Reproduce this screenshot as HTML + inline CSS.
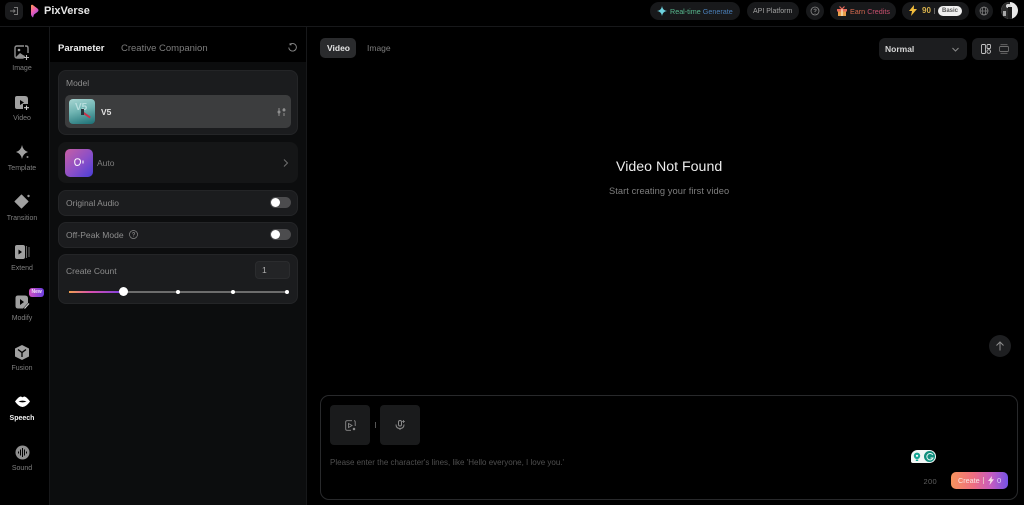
<!DOCTYPE html>
<html lang="en">
<head>
<meta charset="utf-8">
<title>PixVerse</title>
<style>
html,body{margin:0;padding:0;background:#000;width:1024px;height:505px;overflow:hidden}
body{position:relative;font-family:"Liberation Sans",sans-serif;color:#fff}
#r{position:absolute;left:0;top:0;width:1024px;height:505px;filter:blur(.35px);overflow:hidden}
.a{position:absolute}
.t{position:absolute;white-space:nowrap;line-height:1}
.card{position:absolute;left:58px;width:240px;background:#1b1c1e;border-radius:8px;box-sizing:border-box;border:1px solid #242527}
.nav{position:absolute;left:0;width:44px;text-align:center;font-size:7px;color:#7f7f7f;line-height:1}
.pill{position:absolute;top:2px;height:18px;border-radius:9px;background:#18191b}
.sw{position:absolute;left:270px;width:21px;height:11px;border-radius:6px;background:#4c4c4e}
.sw:after{content:"";position:absolute;left:1px;top:1px;width:9px;height:9px;border-radius:50%;background:#fff}
svg{position:absolute;overflow:visible}
</style>
</head>
<body>
<div id="r">
<!-- frame lines -->
<div class="a" style="left:0;top:26px;width:1024px;height:1px;background:#17181a"></div>
<div class="a" style="left:49px;top:27px;width:1px;height:478px;background:#17181a"></div>
<div class="a" style="left:50px;top:62px;width:256px;height:443px;background:#0c0d0e"></div>
<div class="a" style="left:306px;top:27px;width:1px;height:478px;background:#17181a"></div>

<!-- top left -->
<div class="a" style="left:5px;top:2px;width:18px;height:18px;border-radius:5px;background:#1a1b1d"></div>
<svg style="left:9px;top:6px" width="10" height="10" viewBox="0 0 10 10" fill="none" stroke="#7c7c7c" stroke-width="1"><path d="M5 1.5h3.500v7H5M1 5h5M4.500 3.500 6 5 4.500 6.500"/></svg>
<svg style="left:30px;top:4px" width="9" height="14" viewBox="0 0 9 14"><defs><linearGradient id="lg" x1="0" y1="0" x2=".6" y2="1"><stop offset="0" stop-color="#ff9a4d"/><stop offset=".5" stop-color="#ee5fb0"/><stop offset="1" stop-color="#8f4fe8"/></linearGradient></defs><path d="M1 1.500Q1 .5 2.500 .8L7.500 4.500Q9.500 6.300 7.500 8L4 10.500 3 13.500Q1 12 1 10Z" fill="url(#lg)"/></svg>
<div class="t" style="left:44px;top:6px;font-size:11px;font-weight:700;color:#e6e6e6">PixVerse</div>

<!-- top right -->
<div class="pill" style="left:650px;width:90px"></div>
<svg style="left:657px;top:6px" width="10" height="10" viewBox="0 0 10 10"><path d="M5 0Q5.600 4.400 10 5 5.600 5.600 5 10 4.400 5.600 0 5 4.400 4.400 5 0Z" fill="#6fd3e0"/></svg>
<div class="t" style="left:670px;top:7.500px;font-size:7.200px;color:#58b98f">Real-time <span style="color:#4a7fb8">Generate</span></div>
<div class="pill" style="left:747px;width:52px"></div>
<div class="t" style="left:753px;top:8px;font-size:7px;color:#a2a2a2">API Platform</div>
<div class="pill" style="left:806px;width:18px"></div>
<svg style="left:810px;top:6px" width="10" height="10" viewBox="0 0 10 10" fill="none" stroke="#8a8a8a" stroke-width=".8"><circle cx="5" cy="5" r="4"/><path d="M3.800 4Q4 3 5 3 6.200 3 6.200 4 6.200 4.700 5 5.300V6M5 7v.5"/></svg>
<div class="pill" style="left:830px;width:66px"></div>
<svg style="left:837px;top:6px" width="10" height="10" viewBox="0 0 10 10"><rect x="1" y="5" width="8" height="5" fill="#e9a04b"/><rect x="0" y="3" width="10" height="2.500" fill="#e86a5a"/><rect x="4.200" y="3" width="1.600" height="7" fill="#f5d9b0"/><path d="M5 3 2.500 .5M5 3 7.500 .5" stroke="#e86a5a" stroke-width="1.200"/></svg>
<div class="t" style="left:850px;top:8px;font-size:7.200px;color:#d4694e">Earn <span style="color:#c9506f">Credits</span></div>
<div class="pill" style="left:902px;width:67px"></div>
<svg style="left:909px;top:5px" width="8" height="11" viewBox="0 0 8 11"><path d="M5 0 0 6h3L2 11 8 4H4.800Z" fill="#f3bd3c"/></svg>
<div class="t" style="left:922px;top:7px;font-size:8px;font-weight:700;color:#d8b24c">90</div>
<div class="a" style="left:934px;top:8px;width:1px;height:6px;background:#666"></div>
<div class="a" style="left:938px;top:6px;width:24px;height:10px;border-radius:5px;background:#f0f0f0"></div>
<div class="t" style="left:942px;top:8px;font-size:6px;font-weight:700;color:#555">Basic</div>
<div class="pill" style="left:975px;width:18px"></div>
<svg style="left:979px;top:6px" width="10" height="10" viewBox="0 0 10 10" fill="none" stroke="#8a8a8a" stroke-width=".7"><circle cx="5" cy="5" r="4"/><ellipse cx="5" cy="5" rx="1.800" ry="4"/><path d="M1 5h8"/></svg>
<div class="a" style="left:1001px;top:2px;width:17px;height:17px;border-radius:50%;background:#e8e8e8;overflow:hidden">
<div class="a" style="left:0;top:0;width:9px;height:17px;background:#2b2b2b"></div>
<div class="a" style="left:5px;top:2px;width:5px;height:4px;background:#d8d8d8;border-radius:2px"></div>
<div class="a" style="left:7px;top:5px;width:4px;height:12px;background:#1c1c1c"></div>
<div class="a" style="left:2px;top:9px;width:3px;height:5px;background:#a8a8a8"></div>
</div>

<!-- sidebar -->
<svg style="left:14px;top:45px" width="16" height="16" viewBox="0 0 16 16" fill="none"><path d="M10 1H3Q1 1 1 3v8q0 2 2 2h6" stroke="#8f8f8f" stroke-width="1.400"/><path d="M11 1h1q2 0 2 2v5" stroke="#8f8f8f" stroke-width="1.400"/><circle cx="5" cy="5" r="1.300" fill="#a0a0a0"/><path d="M2 12 6 8l3 2 2 1-1 2.500H3Z" fill="#8f8f8f"/><path d="M12.500 10v5M10 12.500h5" stroke="#bbb" stroke-width="1.100"/></svg>
<div class="nav" style="top:65px">Image</div>
<svg style="left:14px;top:95px" width="16" height="16" viewBox="0 0 16 16"><path d="M3 1h8q3 0 3 3v5H9v5H3q-2 0-2-2V3q0-2 2-2Z" fill="#a0a0a0"/><path d="M6 5l4 2.500L6 10Z" fill="#000"/><path d="M12.500 10.500v4.500M10 12.700h5" stroke="#ccc" stroke-width="1.100"/></svg>
<div class="nav" style="top:115px">Video</div>
<svg style="left:15px;top:145px" width="15" height="15" viewBox="0 0 15 15"><path d="M7 0Q8 5.500 13 7 8 8.500 7 14 6 8.500 1 7 6 5.500 7 0Z" fill="#a0a0a0"/><circle cx="12.500" cy="12" r="1" fill="#888"/></svg>
<div class="nav" style="top:165px">Template</div>
<svg style="left:14px;top:194px" width="17" height="15" viewBox="0 0 17 15"><path d="M7.500 1 14 7.500 7.500 14 1 7.500Z" fill="#a0a0a0" stroke="#a0a0a0" stroke-linejoin="round"/><circle cx="14.500" cy="2" r="1.200" fill="#999"/></svg>
<div class="nav" style="top:215px">Transition</div>
<svg style="left:15px;top:245px" width="15" height="14" viewBox="0 0 15 14"><rect x="0" y="0" width="10" height="14" rx="2" fill="#a0a0a0"/><path d="M3.500 4.500 7 7 3.500 9.500Z" fill="#000"/><path d="M11.500 1v12M14 2v10" stroke="#666" stroke-width="1.100"/></svg>
<div class="nav" style="top:265px">Extend</div>
<svg style="left:15px;top:295px" width="15" height="15" viewBox="0 0 15 15"><path d="M3 .5h7q3 0 3 3V8l-5 5.500H3q-2.500 0-2.500-2.500V3Q.5.500 3 .5Z" fill="#a0a0a0"/><path d="M5 4l4 3-4 3Z" fill="#000"/><path d="M9.500 13.500 14 8.500" stroke="#ccc" stroke-width="1.300"/></svg>
<div class="a" style="left:29px;top:288px;width:15px;height:9px;border-radius:3px;background:linear-gradient(90deg,#d14fc0,#6a3fe0)"></div>
<div class="t" style="left:31.500px;top:290px;font-size:5px;font-weight:700;color:#f5e8fa">New</div>
<div class="nav" style="top:315px">Modify</div>
<svg style="left:15px;top:345px" width="14" height="15" viewBox="0 0 14 15"><path d="M7 0 14 3.500v8L7 15 0 11.500v-8Z" fill="#a0a0a0"/><path d="M3 4.500 7 7.500 11 4.500M7 7.500V12" stroke="#000" stroke-width="1.300" fill="none"/></svg>
<div class="nav" style="top:365px">Fusion</div>
<svg style="left:15px;top:396px" width="15" height="11" viewBox="0 0 15 11"><path d="M0 5.500Q4 0 6 .5 7 1.200 7.500 1.200 8 1.200 9 .5 11 0 15 5.500 11 11 7.500 11 4 11 0 5.500Z" fill="#fff"/><path d="M3.500 5.500Q7.500 3.800 11.500 5.500 7.500 7.300 3.500 5.500Z" fill="#000"/></svg>
<div class="nav" style="top:415px;color:#f2f2f2;font-weight:700">Speech</div>
<svg style="left:15px;top:445px" width="15" height="15" viewBox="0 0 15 15"><circle cx="7.500" cy="7.500" r="7" fill="#8f8f8f"/><path d="M3.500 6.500v2M5.500 4.500v6M7.500 3v9M9.500 4.500v6M11.500 6.500v2" stroke="#000" stroke-width="1"/></svg>
<div class="nav" style="top:465px">Sound</div>

<!-- panel header -->
<div class="t" style="left:58px;top:43.500px;font-size:9.500px;font-weight:700;color:#efefef">Parameter</div>
<div class="t" style="left:121px;top:43.500px;font-size:9.500px;color:#7d7d7d">Creative Companion</div>
<svg style="left:288px;top:43px" width="9" height="9" viewBox="0 0 9 9" fill="none" stroke="#8a8a8a" stroke-width=".9"><path d="M2 1.500A3.800 3.800 0 1 1 .8 4.500M2 .2v1.600h1.600"/></svg>

<!-- Model -->
<div class="card" style="top:70px;height:65px"></div>
<div class="t" style="left:66px;top:79px;font-size:8.500px;color:#8d8d8d">Model</div>
<div class="a" style="left:65px;top:95px;width:226px;height:33px;border-radius:5px;background:#3c3d3e"></div>
<div class="a" style="left:69px;top:99px;width:26px;height:25px;border-radius:4px;overflow:hidden;background:linear-gradient(165deg,#a8d6d3 0,#6fb4b2 45%,#1b6e74 100%)">
<div class="t" style="left:6px;top:4px;font-size:10px;color:#b8dede;font-weight:700">V5</div>
<div class="a" style="left:13px;top:15px;width:9px;height:2px;background:#c8324a;transform:rotate(35deg)"></div>
<div class="a" style="left:12px;top:10px;width:3px;height:6px;background:#27343a"></div>
</div>
<div class="t" style="left:101px;top:107.500px;font-size:8.500px;font-weight:700;color:#e2e2e2">V5</div>
<svg style="left:277px;top:107px" width="9" height="10" viewBox="0 0 9 10" fill="none" stroke="#8f8f8f" stroke-width="1"><path d="M2 1v3M2 6v3M7 1v3M7 6v3"/><circle cx="2" cy="5" r="1" fill="#8f8f8f"/><circle cx="7" cy="3" r="1" fill="#8f8f8f"/></svg>

<!-- Auto -->
<div class="a" style="left:58px;top:142px;width:240px;height:41px;border-radius:8px;background:#151617"></div>
<div class="a" style="left:65px;top:149px;width:28px;height:28px;border-radius:5px;background:linear-gradient(135deg,#c75fa4 0,#8a4fc8 55%,#4a3fd6 100%)"></div>
<svg style="left:74px;top:158px" width="10" height="9" viewBox="0 0 10 9" fill="none" stroke="#fff" stroke-width="1"><path d="M3.500 .8Q.7 .8.7 4t2.300 3.500L5 7Q6.500 5.500 6.500 4 6.500 .8 3.500 .8Z"/><path d="M9 2.500v3"/></svg>
<div class="t" style="left:97px;top:158.500px;font-size:8.500px;color:#7d7d7d">Auto</div>
<svg style="left:283px;top:159px" width="5" height="8" viewBox="0 0 5 8" fill="none" stroke="#707070" stroke-width="1"><path d="M1 .5 4.500 4 1 7.500"/></svg>

<!-- toggles -->
<div class="card" style="top:190px;height:26px"></div>
<div class="t" style="left:66px;top:198.500px;font-size:8.500px;color:#8d8d8d">Original Audio</div>
<div class="sw" style="top:197px"></div>
<div class="card" style="top:222px;height:26px"></div>
<div class="t" style="left:66px;top:230.500px;font-size:8.500px;color:#8d8d8d;letter-spacing:.05px">Off-Peak Mode</div>
<svg style="left:129px;top:230px" width="9" height="9" viewBox="0 0 9 9" fill="none" stroke="#8a8a8a" stroke-width=".7"><circle cx="4.500" cy="4.500" r="4"/><path d="M3.300 3.500Q3.500 2.500 4.500 2.500 5.700 2.500 5.700 3.500 5.700 4.200 4.500 4.800V5.500M4.500 6.200v.6"/></svg>
<div class="sw" style="top:229px"></div>

<!-- Create count -->
<div class="card" style="top:254px;height:50px"></div>
<div class="t" style="left:66px;top:266.500px;font-size:8.500px;color:#8d8d8d">Create Count</div>
<div class="a" style="left:255px;top:261px;width:35px;height:18px;box-sizing:border-box;border-radius:4px;background:#232426;border:1px solid #2b2c2e"></div>
<div class="t" style="left:262px;top:266px;font-size:8.500px;color:#b0b0b0">1</div>
<div class="a" style="left:123px;top:290.500px;width:165px;height:2px;background:#6d6d6d"></div>
<div class="a" style="left:69px;top:290.500px;width:54px;height:2px;background:linear-gradient(90deg,#f0a050 0,#d850b0 40%,#7a40e0 100%)"></div>
<div class="a" style="left:119px;top:287px;width:9px;height:9px;border-radius:50%;background:#fff"></div>
<div class="a" style="left:176px;top:289.500px;width:4px;height:4px;border-radius:50%;background:#fff"></div>
<div class="a" style="left:230.500px;top:289.500px;width:4px;height:4px;border-radius:50%;background:#fff"></div>
<div class="a" style="left:285px;top:289.500px;width:4px;height:4px;border-radius:50%;background:#fff"></div>

<!-- main tabs -->
<div class="a" style="left:320px;top:38px;width:36px;height:20px;border-radius:5px;background:#2a2b2d"></div>
<div class="t" style="left:327px;top:44px;font-size:8.500px;font-weight:700;color:#e6e6e6">Video</div>
<div class="t" style="left:367px;top:44px;font-size:8.500px;color:#7d7d7d">Image</div>

<div class="a" style="left:879px;top:38px;width:88px;height:22px;border-radius:6px;background:#1c1d1f"></div>
<div class="t" style="left:885px;top:45px;font-size:8.500px;font-weight:700;color:#d6d6d6">Normal</div>
<svg style="left:952px;top:47px" width="7" height="5" viewBox="0 0 7 5" fill="none" stroke="#8a8a8a" stroke-width="1"><path d="M.5 1 3.500 4 6.500 1"/></svg>
<div class="a" style="left:972px;top:38px;width:46px;height:22px;border-radius:6px;background:#1c1d1f"></div>
<svg style="left:981px;top:44px" width="10" height="10" viewBox="0 0 10 10" fill="none" stroke="#c4c4c4" stroke-width=".9"><rect x=".5" y=".5" width="4" height="9" rx="1"/><rect x="6" y=".5" width="3.500" height="4" rx="1"/><circle cx="7.700" cy="7.500" r="1.800"/></svg>
<svg style="left:999px;top:44px" width="10" height="10" viewBox="0 0 10 10" fill="none" stroke="#6e6e6e" stroke-width=".9"><path d="M1.500 .7h7M1.500 9.300h7"/><rect x=".5" y="2.500" width="9" height="5" rx="1"/></svg>

<!-- empty state -->
<div class="t" style="left:616px;top:160px;font-size:14.200px;color:#ececec">Video Not Found</div>
<div class="t" style="left:609px;top:187px;font-size:9.300px;color:#7e7e7e;letter-spacing:.06px">Start creating your first video</div>

<!-- scroll top -->
<div class="a" style="left:989px;top:335px;width:22px;height:22px;border-radius:50%;background:#1e1f21"></div>
<svg style="left:995px;top:341px" width="10" height="10" viewBox="0 0 10 10" fill="none" stroke="#8e8e8e" stroke-width="1"><path d="M5 9.500V1M1.500 4.500 5 1l3.500 3.500"/></svg>

<!-- prompt box -->
<div class="a" style="left:320px;top:395px;width:698px;height:105px;box-sizing:border-box;border:1px solid #28292b;border-radius:9px"></div>
<div class="a" style="left:330px;top:405px;width:40px;height:40px;border-radius:4px;background:#1a1b1c"></div>
<svg style="left:345px;top:420px" width="11" height="11" viewBox="0 0 11 11" fill="none" stroke="#8a8a8a" stroke-width=".9"><path d="M7 .7H2Q.7.700.7 2v7Q.7 10.300 2 10.300h4M9 .7h.2q1 0 1 1.300V6"/><path d="M3.500 3.500 7 5.500 3.500 7.500Z"/><circle cx="9" cy="9" r=".8" fill="#8a8a8a"/></svg>
<div class="a" style="left:374.500px;top:422px;width:1px;height:6px;background:#555"></div>
<div class="a" style="left:380px;top:405px;width:40px;height:40px;border-radius:4px;background:#1a1b1c"></div>
<svg style="left:395px;top:419px" width="11" height="12" viewBox="0 0 11 12" fill="none" stroke="#8a8a8a" stroke-width="1"><path d="M3.500 3V5.500Q3.500 7 5 7 6.500 7 6.500 5.500V3Q6.500 1.500 5 1.500 3.500 1.500 3.500 3ZM1 5.500Q1 9.500 5 9.500 9 9.500 9 5.500M5 9.500V11"/><path d="M8.500 1v3M7 2.500h3" stroke-width=".8"/></svg>
<div class="t" style="left:330px;top:459px;font-size:8px;color:#4f4f4f">Please enter the character's lines, like 'Hello everyone, I love you.'</div>

<!-- grammarly -->
<div class="a" style="left:911px;top:450px;width:25px;height:13px;border-radius:7px 7px 7px 2px;background:#f2f6f5"></div>
<svg style="left:913px;top:452px" width="9" height="10" viewBox="0 0 9 10"><circle cx="4" cy="3.800" r="3.200" fill="#16a594"/><rect x="2.800" y="7.500" width="2.400" height="1.500" fill="#16a594"/><circle cx="4" cy="3.800" r="1.100" fill="#fff"/></svg>
<div class="a" style="left:924px;top:451px;width:11px;height:11px;border-radius:50%;background:#128f7e"></div>
<svg style="left:925.500px;top:452.500px" width="8" height="8" viewBox="0 0 8 8" fill="none" stroke="#e7f6f3" stroke-width="1"><path d="M6.800 2A3.200 3.200 0 1 0 7 5H4.500"/></svg>

<div class="t" style="left:923.500px;top:478px;font-size:7.500px;color:#5e5e5e;letter-spacing:.3px">200</div>
<div class="a" style="left:951px;top:472px;width:57px;height:17px;border-radius:5px;background:linear-gradient(90deg,#f6935c 0,#ee6d82 40%,#c65cc0 70%,#7452e4 100%)"></div>
<div class="t" style="left:958px;top:477px;font-size:7.200px;color:#f8e8e4">Create</div>
<div class="a" style="left:983px;top:477px;width:1px;height:7px;background:#e9b6c4"></div>
<svg style="left:988px;top:476px" width="6" height="9" viewBox="0 0 6 9"><path d="M4 0 0 5h2.300L1.500 9 6 3.300H3.500Z" fill="#f6dce6"/></svg>
<div class="t" style="left:997px;top:477px;font-size:7.500px;color:#e4d4f6">0</div>
</div>
</body>
</html>
